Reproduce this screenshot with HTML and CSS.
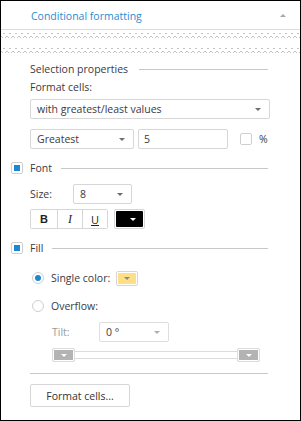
FILE: index.html
```html
<!DOCTYPE html>
<html lang="en">
<head>
    <meta charset="UTF-8">
    <title>Conditional formatting</title>
    <link rel="stylesheet" href="styles.css">
</head>
<body>
    <div class="panel">
        <div class="panel-header">
            <span class="panel-title">Conditional formatting</span>
            <span class="collapse-arrow"></span>
        </div>

        <!-- torn edge between collapsed part and the body -->
        <svg class="tear" width="299" height="28" viewBox="0 0 299 28">
            <defs>
                <pattern id="zigzag" width="6" height="5" patternUnits="userSpaceOnUse">
                    <polyline points="0,1 3,4 6,1" fill="none" stroke="#c4c4c4" stroke-width="1"/>
                </pattern>
            </defs>
            <rect x="0" y="3" width="299" height="5" fill="url(#zigzag)"/>
            <rect x="0" y="18" width="299" height="5" fill="url(#zigzag)"/>
        </svg>

        <div class="content">
            <div class="section-title section-title--plain"><span>Selection properties</span></div>
            <div class="field-label">Format cells:</div>
            <div class="select select--wide"><span>with greatest/least values</span></div>

            <div class="row row--rank">
                <div class="select select--rank"><span>Greatest</span></div>
                <div class="input input--count">5</div>
                <span class="checkbox checkbox--percent"></span>
                <span class="percent">%</span>
            </div>

            <div class="section-title"><span class="checkbox checkbox--on"></span><span>Font</span></div>
            <div class="row row--size">
                <span class="field-name">Size:</span>
                <div class="select select--size"><span>8</span></div>
            </div>
            <div class="row row--style">
                <div class="btn-group">
                    <button class="tool tool--bold">B</button>
                    <button class="tool tool--italic">I</button>
                    <button class="tool tool--underline">U</button>
                </div>
                <button class="color-pick color-pick--font"><span class="swatch swatch--black"></span></button>
            </div>

            <div class="section-title"><span class="checkbox checkbox--on"></span><span>Fill</span></div>
            <div class="radio-row radio-row--single">
                <span class="radio radio--on"></span>
                <span>Single color:</span>
                <button class="color-pick color-pick--fill"><span class="swatch swatch--yellow"></span></button>
            </div>
            <div class="radio-row radio-row--overflow">
                <span class="radio"></span>
                <span>Overflow:</span>
            </div>
            <div class="row row--tilt">
                <span class="field-name field-name--off">Tilt:</span>
                <div class="select select--tilt select--off"><span>0 °</span></div>
            </div>
            <div class="slider">
                <span class="slider-thumb"></span>
                <span class="slider-track"></span>
                <span class="slider-thumb"></span>
            </div>

            <div class="separator"></div>
            <button class="action-btn">Format cells...</button>
        </div>
    </div>
</body>
</html>
```

FILE: styles.css
```css
body {
    margin: 0;
    font-family: 'Open Sans', 'Segoe UI', sans-serif;
    font-size: 10.5px;
    color: #3a3a44;
}

button {
    font-family: inherit;
    font-size: inherit;
    color: inherit;
    background: #fff;
    margin: 0;
    padding: 0;
}

.panel {
    width: 301px;
    height: 421px;
    box-sizing: border-box;
    border: 1px solid #000;
    background: #fff;
}

.panel-header {
    height: 28px;
    border-bottom: 1px solid #dcdcdc;
    display: flex;
    align-items: center;
    justify-content: space-between;
    padding: 0 14px 0 30px;
}

.panel-title {
    font-size: 10.5px;
    color: #2a8cd2;
    margin-top: 2px;
}

.collapse-arrow {
    width: 0;
    height: 0;
    border-left: 3px solid transparent;
    border-right: 3px solid transparent;
    border-bottom: 3px solid #a8a8a8;
    margin-top: 1px;
}

.tear {
    display: block;
}

.content {
    padding: 0 30px 0 29px;
}

/* section headings with rule */
.section-title {
    display: flex;
    align-items: center;
    height: 14px;
    margin-top: 12px;
    margin-left: -19px;
}

.section-title::after {
    content: '';
    flex: 1;
    height: 1px;
    background: #c8c8c8;
    margin: 1px 2px 0 9px;
}

.section-title--plain {
    margin-top: 4px;
    margin-left: 0;
}

.section-title--plain::after {
    margin-left: 11px;
}

.section-title .checkbox {
    margin-right: 7px;
}

.field-label {
    height: 14px;
    line-height: 14px;
    margin-top: 4px;
}

.row {
    display: flex;
    align-items: center;
}

.row--rank {
    margin-top: 10px;
}

.row--size {
    margin-top: 9px;
}

.row--style {
    margin-top: 5px;
}

.row--tilt {
    margin-top: 9px;
    padding-left: 22px;
}

.field-name {
    width: 43px;
}

.field-name--off {
    width: 47px;
    color: #9a9a9a;
}

/* dropdowns and inputs */
.select,
.input {
    display: flex;
    align-items: center;
    height: 20px;
    box-sizing: border-box;
    border: 1px solid #d6d6d6;
    border-radius: 2px;
    padding-left: 6px;
    background: #fff;
}

.select::after {
    content: '';
    margin-left: auto;
    margin-right: 8px;
    border-left: 3px solid transparent;
    border-right: 3px solid transparent;
    border-top: 3px solid #6e6e6e;
}

.select--wide {
    width: 240px;
    margin-top: 5px;
}

.select--rank {
    width: 104px;
}

.input--count {
    width: 90px;
    margin-left: 4px;
    padding-left: 5px;
}

.select--size {
    width: 59px;
}

.select--tilt {
    width: 70px;
}

.select--off {
    border-color: #dedede;
}

.select--off::after {
    border-top-color: #b0b0b0;
}

/* checkboxes and radios */
.checkbox {
    display: flex;
    align-items: center;
    justify-content: center;
    width: 12px;
    height: 12px;
    box-sizing: border-box;
    border: 1px solid #cfcfcf;
    border-radius: 2px;
    background: #fff;
}

.checkbox--on::before {
    content: '';
    width: 6px;
    height: 6px;
    background: #1d88d0;
}

.checkbox--percent {
    margin-left: 12px;
}

.percent {
    margin-left: 7px;
}

.radio-row {
    display: flex;
    align-items: center;
    height: 14px;
    padding-left: 2px;
}

.radio-row--single {
    margin-top: 16px;
}

.radio-row--overflow {
    margin-top: 14px;
}

.radio {
    display: flex;
    align-items: center;
    justify-content: center;
    width: 12px;
    height: 12px;
    box-sizing: border-box;
    border: 1px solid #cfcfcf;
    border-radius: 50%;
    margin-right: 7px;
}

.radio--on::before {
    content: '';
    width: 6px;
    height: 6px;
    border-radius: 50%;
    background: #1d88d0;
}

/* font style buttons */
.btn-group {
    display: flex;
    border: 1px solid #d6d6d6;
    border-radius: 2px;
    height: 20px;
    box-sizing: border-box;
}

.tool {
    width: 25px;
    border: none;
    border-left: 1px solid #d6d6d6;
    color: #222;
}

.tool:first-child {
    border-left: none;
    width: 26px;
}

.tool--bold {
    font-weight: bold;
    font-family: 'Liberation Sans', sans-serif;
    font-size: 11px;
}

.tool--italic {
    font-style: italic;
    font-family: 'Liberation Serif', serif;
    font-size: 12px;
}

.tool--underline {
    text-decoration: underline;
    font-size: 11px;
}

.color-pick {
    display: flex;
    box-sizing: border-box;
    border: 1px solid #d6d6d6;
    border-radius: 2px;
    padding: 1px;
}

.color-pick--font {
    width: 31px;
    height: 20px;
    margin-left: 6px;
}

.color-pick--fill {
    width: 22px;
    height: 15px;
    margin-left: 6px;
}

.swatch {
    flex: 1;
    display: flex;
    align-items: center;
    justify-content: flex-end;
    border-radius: 1px;
}

.swatch::after {
    content: '';
    border-left: 3px solid transparent;
    border-right: 3px solid transparent;
    border-top: 3px solid #fff;
}

.swatch--black {
    background: #000;
}

.swatch--black::after {
    margin-right: 7px;
}

.swatch--yellow {
    background: #ffdf85;
    justify-content: center;
}

.swatch--yellow::after {
    border-top-color: #8a8a8a;
}

/* range slider */
.slider {
    display: flex;
    align-items: center;
    width: 208px;
    height: 14px;
    margin: 6px 0 0 22px;
}

.slider-thumb {
    display: flex;
    align-items: center;
    justify-content: center;
    width: 23px;
    height: 14px;
    box-sizing: border-box;
    border: 1px solid #dcdcdc;
    border-radius: 2px;
    background: #b3b3b3;
    box-shadow: inset 0 0 0 1px #fff;
}

.slider-thumb::after {
    content: '';
    border-left: 3px solid transparent;
    border-right: 3px solid transparent;
    border-top: 3px solid #fff;
}

.slider-track {
    flex: 1;
    height: 8px;
    box-sizing: border-box;
    border-top: 1px solid #dcdcdc;
    border-bottom: 1px solid #dcdcdc;
}

.separator {
    height: 1px;
    background: #c8c8c8;
    margin: 11px 2px 0 0;
}

.action-btn {
    display: block;
    width: 100px;
    height: 23px;
    margin-top: 10px;
    border: 1px solid #d6d6d6;
    border-radius: 2px;
    color: #333;
}
```
